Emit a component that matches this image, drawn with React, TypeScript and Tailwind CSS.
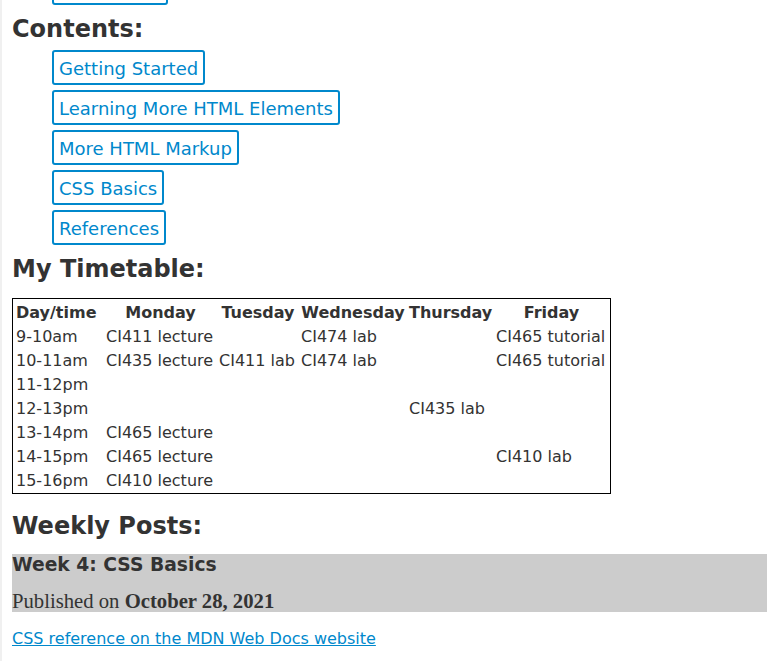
const navLinks = [
  "Getting Started",
  "Learning More HTML Elements",
  "More HTML Markup",
  "CSS Basics",
  "References",
];

const days = ["Day/time", "Monday", "Tuesday", "Wednesday", "Thursday", "Friday"];
const colWidths = ["w-[88px]", "w-[111px]", "w-[80px]", "w-[106px]", "w-[85px]", "w-[113px]"];

const rows: string[][] = [
  ["9-10am", "CI411 lecture", "", "CI474 lab", "", "CI465 tutorial"],
  ["10-11am", "CI435 lecture", "CI411 lab", "CI474 lab", "", "CI465 tutorial"],
  ["11-12pm", "", "", "", "", ""],
  ["12-13pm", "", "", "", "CI435 lab", ""],
  ["13-14pm", "CI465 lecture", "", "", "", ""],
  ["14-15pm", "CI465 lecture", "", "", "", "CI410 lab"],
  ["15-16pm", "CI410 lecture", "", "", "", ""],
];

function NavBox({ label }: { label: string }) {
  return (
    <a
      href="#"
      className="inline-block rounded-[3px] border-2 border-[#0088cc] px-[5px] pt-[6px] pb-[4px] text-[18px] leading-[21px] text-[#0088cc]"
    >
      {label}
    </a>
  );
}

function Heading({ children, className = "" }: { children: React.ReactNode; className?: string }) {
  return (
    <h2 className={`text-[24px] font-bold leading-[28px] text-[#333333] ${className}`}>
      {children}
    </h2>
  );
}

export default function App() {
  return (
    <div
      className="flex h-[661px] overflow-hidden bg-white text-[#333333]"
      style={{ fontFamily: '"DejaVu Sans", Verdana, sans-serif' }}
    >
      {/* left page edge */}
      <div className="w-[2px] shrink-0 bg-[#f0f0f0]" />

      <main className="min-w-0 flex-1 pl-[10px]">
        {/* nav box scrolled mostly out of view */}
        <div className="-mt-[30px] pl-[40px]">
          <span className="block h-[35px] w-[116px] rounded-[3px] border-2 border-[#0088cc]" />
        </div>

        <Heading className="mt-[10px]">Contents:</Heading>
        <ul className="mt-[7px] flex flex-col items-start gap-[5px] pl-[40px]">
          {navLinks.map((l) => (
            <li key={l} className="flex">
              <NavBox label={l} />
            </li>
          ))}
        </ul>

        <Heading className="mt-[10px]">My Timetable:</Heading>
        <table className="mt-[15px] w-[599px] table-fixed border-separate border-spacing-[2px] border border-black text-[16px] leading-[20px]">
          <thead>
            <tr>
              {days.map((d, i) => (
                <th key={d} className={`${colWidths[i]} whitespace-nowrap px-[1px] pt-[2px] pb-0 ${i === 0 ? "text-left" : "text-center"} font-bold`}>
                  {d}
                </th>
              ))}
            </tr>
          </thead>
          <tbody>
            {rows.map((r) => (
              <tr key={r[0]}>
                {r.map((c, i) => (
                  <td key={i} className="h-[22px] whitespace-nowrap px-[1px] pt-[2px] pb-0 text-left">
                    {c}
                  </td>
                ))}
              </tr>
            ))}
          </tbody>
        </table>

        <Heading className="mt-[18px]">Weekly Posts:</Heading>
        <article className="mt-[14px]">
          <div className="bg-[#cccccc]">
            <h3 className="text-[18.72px] font-bold leading-[22px]">Week 4: CSS Basics</h3>
            <p
              className="mt-[15px] text-[20.7px] leading-[21px]"
              style={{ fontFamily: '"Liberation Serif", "Times New Roman", serif' }}
            >
              Published on <strong className="font-bold">October 28, 2021</strong>
            </p>
          </div>
          <p className="mt-[17px] text-[16px] leading-[19px]">
            <a href="#" className="text-[#0088cc] underline">
              CSS reference on the MDN Web Docs website
            </a>
          </p>
        </article>
      </main>
    </div>
  );
}
